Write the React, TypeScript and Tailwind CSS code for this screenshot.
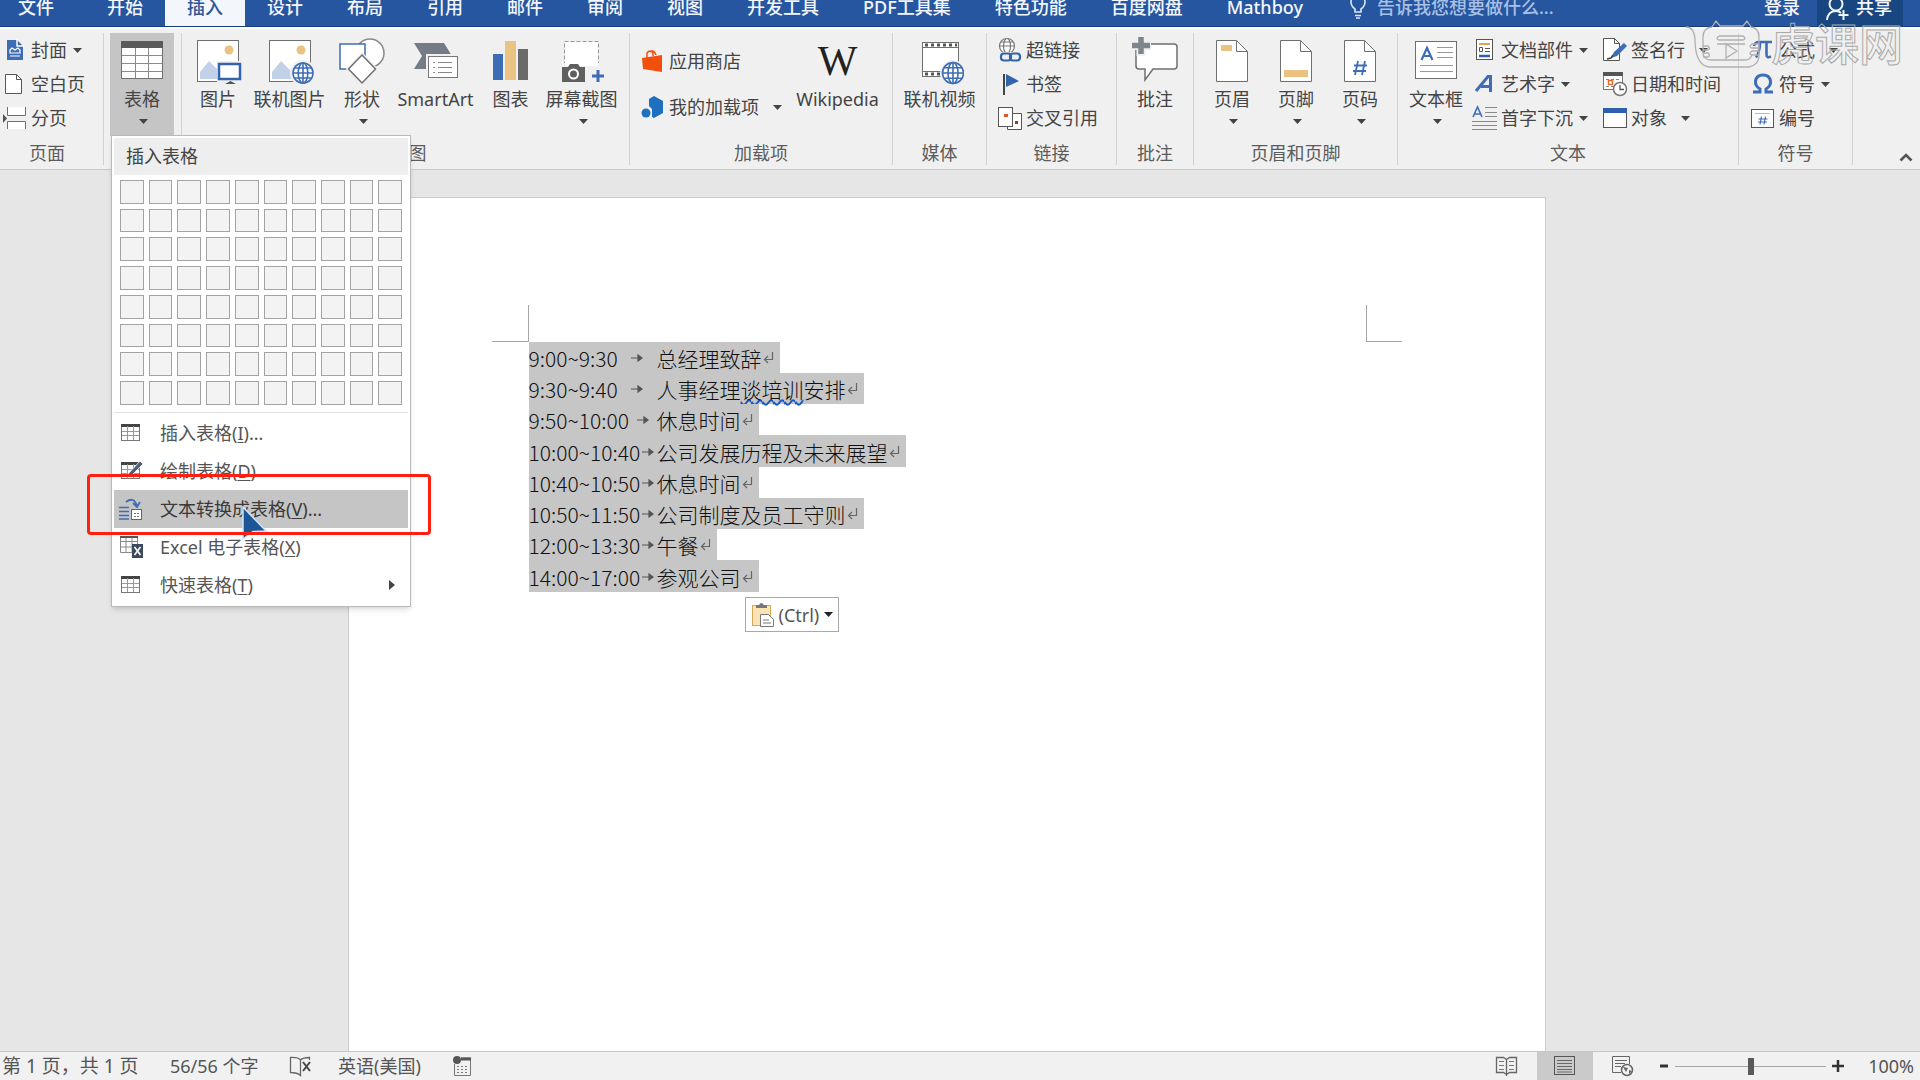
import type { ReactNode } from 'react';

const stroke = '#6f6f6f';
const blue = '#3e6db5';
const sand = '#eac282';

function Caret({ className = '' }: { className?: string }) {
  return (
    <svg className={`h-[5px] w-[9px] shrink-0 ${className}`} viewBox="0 0 9 5" aria-hidden="true">
      <path d="M0 0h9L4.5 5z" fill="currentColor" />
    </svg>
  );
}

function Svg({ w, h, children }: { w: number; h: number; children: ReactNode }) {
  return (
    <svg width={w} height={h} viewBox={`0 0 ${w} ${h}`} fill="none" aria-hidden="true" className="shrink-0">
      {children}
    </svg>
  );
}

/* ---------- large icons (48 x 48) ---------- */

function Globe({ x, y, r }: { x: number; y: number; r: number }) {
  return (
    <g stroke={blue} strokeWidth="1.6" fill="#fff">
      <circle cx={x} cy={y} r={r} />
      <ellipse cx={x} cy={y} rx={r * 0.48} ry={r} />
      <path d={`M${x} ${y - r}v${r * 2}M${x - r} ${y}h${r * 2}M${x - r * 0.85} ${y - r * 0.5}h${r * 1.7}M${x - r * 0.85} ${y + r * 0.5}h${r * 1.7}`} />
    </g>
  );
}

const TableIcon = () => (
  <Svg w={48} h={48}>
    <rect x="3.5" y="4.5" width="41" height="37" fill="#fff" stroke={stroke} />
    <rect x="3" y="4" width="42" height="7" fill="#5a5a5a" />
    <path d="M4 18.5h40M4 26.5h40M4 34.5h40M17.5 11v30M30.5 11v30" stroke="#8a8a8a" />
  </Svg>
);
const Photo = () => (
  <>
    <rect x="3.5" y="3.5" width="41" height="41" fill="#fff" stroke={stroke} />
    <circle cx="35" cy="13" r="4.5" fill={sand} />
    <path d="M6 42V35l9-11 14 14v4z" fill="#c3d1e8" />
  </>
);
const PictureIcon = () => (
  <Svg w={48} h={48}>
    <Photo />
    <rect x="23" y="24" width="25" height="24" fill="#f0f0f0" />
    <rect x="25" y="27" width="21" height="15" fill="#fff" stroke="#3463ad" strokeWidth="2.5" />
    <path d="M31 47l5.5-3 5.5 3z" fill="#555" />
  </Svg>
);
const OnlinePictureIcon = () => (
  <Svg w={48} h={48}>
    <Photo />
    <circle cx="37" cy="36" r="13" fill="#f0f0f0" />
    <Globe x={37} y={36} r={10} />
  </Svg>
);
const ShapesIcon = () => (
  <Svg w={48} h={48}>
    <circle cx="32" cy="16" r="14" fill="#fff" stroke="#8a8a8a" strokeWidth="1.5" />
    <rect x="2" y="7" width="25" height="25" fill="#fff" stroke={blue} strokeWidth="1.5" />
    <path d="M24 18l13.5 14L24 46 10.5 32z" fill="#fff" stroke="#f0f0f0" strokeWidth="4" />
    <path d="M24 18l13.5 14L24 46 10.5 32z" fill="#fff" stroke={stroke} strokeWidth="1.5" />
  </Svg>
);
const SmartArtIcon = () => (
  <Svg w={48} h={48}>
    <path d="M2 6h30l8 13H16v13H2l8-13z" fill="#757b84" />
    <rect x="14" y="17" width="34" height="26" fill="#f0f0f0" />
    <rect x="16.5" y="19.5" width="29" height="21" fill="#fff" stroke="#777" />
    <path d="M26 25.5h14M26 30.5h14M26 35.5h14M21 25.5h2M21 30.5h2M21 35.5h2" stroke="#888" />
  </Svg>
);
const ChartIcon = () => (
  <Svg w={48} h={48}>
    <rect x="6" y="17" width="10" height="26" fill={blue} />
    <rect x="18" y="4" width="11" height="39" fill={sand} />
    <rect x="31" y="12" width="10" height="31" fill="#6a6a6a" />
  </Svg>
);
const ScreenshotIcon = () => (
  <Svg w={48} h={48}>
    <rect x="6.5" y="4.5" width="34" height="38" fill="#fff" stroke="#999" strokeDasharray="4 2" />
    <rect x="2" y="26" width="46" height="22" fill="#f0f0f0" />
    <rect x="7" y="25" width="33" height="4" fill="#fff" />
    <path d="M4 30h6l2-3h8l2 3h5v15H4z" fill="#5f5f5f" />
    <circle cx="15.5" cy="37" r="4.5" stroke="#fff" strokeWidth="2" />
    <path d="M40 33v12M34 39h12" stroke={blue} strokeWidth="3" />
  </Svg>
);
const VideoIcon = () => (
  <Svg w={48} h={48}>
    <rect x="6.5" y="5.5" width="36" height="34" fill="#fff" stroke={stroke} />
    <path d="M7 10.5h35M7 34.5h35" stroke={stroke} />
    <path d="M9 8h32M9 37h32" stroke="#555" strokeWidth="3" strokeDasharray="3 3" />
    <circle cx="37" cy="36" r="13" fill="#f0f0f0" />
    <Globe x={37} y={36} r={10.5} />
  </Svg>
);
const CommentIcon = () => (
  <Svg w={48} h={48}>
    <path d="M7 7h36q3 0 3 3v19q0 3-3 3H22l-8 11v-11H8q-3 0-3-3V10q0-3 2-3z" fill="#fff" stroke={stroke} strokeWidth="1.5" />
    <path d="M10 0v19M0 8.5h20" stroke="#f0f0f0" strokeWidth="9" />
    <path d="M10 0v17M1 8.5h18" stroke="#7f858c" strokeWidth="5.5" />
  </Svg>
);
function PageIcon({ children }: { children: ReactNode }) {
  return (
    <Svg w={48} h={48}>
      <path d="M8.5 3.5h20l11 11v30h-31z" fill="#fff" stroke={stroke} />
      <path d="M28.5 3.5v11h11" stroke={stroke} />
      {children}
    </Svg>
  );
}
const TextBoxIcon = () => (
  <Svg w={48} h={48}>
    <rect x="3.5" y="4.5" width="41" height="37" fill="#fff" stroke={stroke} />
    <path d="M9.5 23l5.5-12 5.5 12M11.5 19h7" stroke={blue} strokeWidth="2.2" />
    <path d="M25 10.5h16M25 15.5h16M25 20.5h16M8 28.5h33M8 34.5h33" stroke="#999" />
  </Svg>
);

/* ---------- small icons (24 x 24) ---------- */

const CoverIcon = () => (
  <Svg w={24} h={24}>
    <path d="M4 2h10l6 6v14H4z" fill={blue} />
    <path d="M14 1v7h7" stroke="#fff" strokeWidth="1.5" />
    <path d="M7 12l2-2 3 2 3-2 2 2v3H7zM7 18h10" stroke="#fff" strokeWidth="1.2" />
  </Svg>
);
const BlankIcon = () => (
  <Svg w={24} h={24}>
    <path d="M2.5 2.5h11l5 5v14h-16z" fill="#fff" stroke="#555" />
    <path d="M13.5 2.5v5h5" stroke="#555" />
  </Svg>
);
const BreakIcon = () => (
  <Svg w={24} h={24}>
    <path d="M4.5 1v8.500h18V1M4.5 23v-7.500h18V23" fill="#fff" stroke={stroke} />
    <path d="M0 8l4 4.500L0 17z" fill="#555" />
  </Svg>
);
const StoreIcon = () => (
  <Svg w={24} h={24}>
    <path d="M1 9l20-3v17L2 20z" fill="#f24f0c" />
    <path d="M6 9V4q3-4 6 0v3M9 3q4-3 6 3" stroke="#f24f0c" strokeWidth="1.5" />
  </Svg>
);
const AddinIcon = () => (
  <Svg w={24} h={24}>
    <path d="M13 1l9 5v12l-9 5-2-1v-8l-3-3V4z" fill="#1f6fc0" />
    <circle cx="5" cy="18" r="4.5" fill="#1f6fc0" />
  </Svg>
);
const LinkIcon = () => (
  <Svg w={24} h={26}>
    <g stroke="#777" strokeWidth="1.2" fill="#fff">
      <circle cx="9" cy="9" r="7.5" />
      <ellipse cx="9" cy="9" rx="3.5" ry="7.5" />
      <path d="M1.5 9h15M3 5h12" />
    </g>
    <rect x="2" y="15" width="22" height="10" fill="#f0f0f0" />
    <rect x="3" y="16.5" width="10" height="7" rx="3" stroke="#3463ad" strokeWidth="2.2" />
    <rect x="12" y="16.5" width="10" height="7" rx="3" stroke="#3463ad" strokeWidth="2.2" />
  </Svg>
);
const BookmarkIcon = () => (
  <Svg w={24} h={24}>
    <path d="M6 2v21" stroke="#444" strokeWidth="2" />
    <path d="M8 2l13 7-13 6z" fill="#3463ad" />
  </Svg>
);
const CrossRefIcon = () => (
  <Svg w={26} h={26}>
    <path d="M10.5 8.5h14v16h-14z" fill="#fff" stroke="#555" />
    <rect x="1.500" y="2.500" width="14" height="19" fill="#fff" stroke="#555" />
    <rect x="7" y="9" width="4" height="3" fill="#e0562b" />
    <rect x="18" y="16" width="3" height="3" fill="#a3341c" />
  </Svg>
);
const PartsIcon = () => (
  <Svg w={24} h={24}>
    <rect x="3.5" y="1.5" width="16" height="20" fill="#fff" stroke="#555" />
    <path d="M6 6h11" stroke="#e0a24e" strokeWidth="2" />
    <path d="M6.5 9.5h3v4h-3z" stroke="#555" />
    <path d="M12 10.5h5M12 13.5h5" stroke="#555" />
    <path d="M6 18h11" stroke="#2e5fae" strokeWidth="2.5" />
  </Svg>
);
const WordArtIcon = () => (
  <Svg w={24} h={24}>
    <path d="M3 19L15 4.5h2.500V20M8 14.5h9" stroke={blue} strokeWidth="3" />
  </Svg>
);
const DropCapIcon = () => (
  <Svg w={26} h={26}>
    <path d="M1 12L5.5 2 10 12M2.500 9h6" stroke={blue} strokeWidth="1.6" />
    <path d="M13 2.5h12M13 7.5h12M13 11.5h12M0 16.5h25M0 20.5h25M0 24.5h25" stroke="#8a8a8a" />
  </Svg>
);
const SignatureIcon = () => (
  <Svg w={26} h={26}>
    <path d="M1.5 1.5h11l5 5v17h-16z" fill="#fff" stroke="#555" />
    <path d="M12.5 1.5v5h5" stroke="#555" />
    <path d="M9 21l3-6 10-9 3 3-10 10z" fill={blue} />
    <path d="M5 22l4-1 2-3" stroke="#444" strokeWidth="1.5" />
  </Svg>
);
const DateIcon = () => (
  <Svg w={26} h={26}>
    <rect x="1.5" y="1.5" width="19" height="17" fill="#fff" stroke="#777" />
    <path d="M1 3h20" stroke="#555" strokeWidth="4" />
    <path d="M4 8.5h14M4 15.5h8" stroke="#888" strokeDasharray="3 2" />
    <rect x="6.5" y="9.5" width="4" height="4" stroke="#e0702b" strokeWidth="1.5" />
    <circle cx="18" cy="18" r="6.5" fill="#fff" stroke="#777" strokeWidth="1.5" />
    <path d="M18 14v4.5h4" stroke="#555" strokeWidth="1.3" />
  </Svg>
);
const ObjectIcon = () => (
  <Svg w={26} h={26}>
    <rect x="1.5" y="3.5" width="23" height="19" fill="#fff" stroke="#555" />
    <path d="M1 5.5h24" stroke="#2e5fae" strokeWidth="5" />
  </Svg>
);
const PiIcon = () => (
  <Svg w={24} h={24}>
    <path d="M3 8q1-4 5-4h13M9 4.5q0 9-4 15M15.5 4.5v12q0 4 4.500 2" stroke={blue} strokeWidth="2.6" />
  </Svg>
);
const OmegaIcon = () => (
  <Svg w={24} h={24}>
    <path d="M2 20h7v-3q-5-3-4.500-8Q5.500 3 12 3t7.500 6q.5 5-4.500 8v3h7" stroke={blue} strokeWidth="3" />
  </Svg>
);
const NumberIcon = () => (
  <Svg w={26} h={26}>
    <rect x="1.500" y="4.500" width="22" height="18" fill="#fff" stroke="#555" />
    <path d="M5 8.5h15" stroke="#bbb" />
    <path d="M11.5 11.5l-1.500 8M15.5 11.5l-1.500 8M8.500 14h9M8 17h9" stroke={blue} strokeWidth="1.2" />
  </Svg>
);

/* ---------- ribbon pieces ---------- */

function Big({ icon, label, width, caret, pressed }: { icon: ReactNode; label: string; width: string; caret?: boolean; pressed?: boolean }) {
  return (
    <button type="button" className={`flex h-[103px] shrink-0 flex-col items-center pt-1 ${width} ${pressed ? 'bg-[#c5c5c5]' : ''}`}>
      {icon}
      <span className="mt-0.5 leading-6 whitespace-nowrap">{label}</span>
      {caret && <Caret className="mt-2 ml-[3px]" />}
    </button>
  );
}

function Small({ icon, label, caret, height = 'h-[34px]' }: { icon: ReactNode; label: string; caret?: 'near' | 'far'; height?: string }) {
  return (
    <button type="button" className={`flex items-center whitespace-nowrap ${height}`}>
      <span className="mr-[3px] flex w-[26px] justify-center">{icon}</span>
      {label}
      {caret && <Caret className={caret === 'far' ? 'ml-[14px]' : 'ml-[6px]'} />}
    </button>
  );
}

function Group({ label, width, children }: { label?: string; width: string; children: ReactNode }) {
  return (
    <section aria-label={label} className={`flex shrink-0 flex-col border-r border-[#d2d2d2] ${width}`}>
      <div className="flex h-[103px]">{children}</div>
      {label && <div className="mt-[5px] text-center leading-6 text-[#5c5c5c]">{label}</div>}
    </section>
  );
}

const tabs = ['开始', '插入', '设计', '布局', '引用', '邮件', '审阅', '视图', '开发工具', 'PDF工具集', '特色功能', '百度网盘', 'Mathboy'];

function TabBar() {
  return (
    <header className="h-[27px] overflow-hidden border-b border-[#163f7c] bg-[#2656a0]">
      <nav className="-mt-[14px] flex h-[41px] items-center font-medium text-[#f3f7fd]">
        <button type="button" className="w-[85px] pr-[13px] text-center">文件</button>
        {tabs.map((t) => (
          <button
            key={t}
            type="button"
            className={`h-full px-[22px] whitespace-nowrap ${t === '插入' ? 'bg-[#f3f6fa] text-[#2b579a]' : ''}`}
          >
            {t}
          </button>
        ))}
        <label className="ml-[24px] flex items-center gap-[10px]">
          <Svg w={18} h={24}>
            <path d="M6 17v-3Q2 11 2 7q0-6 7-6t7 6q0 4-4 7v3zM6 20.5h6M7 23h4" stroke="#dbe6f7" strokeWidth="1.6" />
          </Svg>
          <span className="sr-only">告诉我</span>
          <input className="w-[190px] bg-transparent outline-none placeholder:text-[#a9c0e6] placeholder:opacity-100" placeholder="告诉我您想要做什么..." />
        </label>
        <button type="button" className="ml-auto px-[17px]">登录</button>
        <button type="button" className="mr-[17px] flex h-full items-center gap-[6px] bg-[#174680] pr-[11px] pl-[9px]">
          <Svg w={24} h={28}>
            <circle cx="10" cy="11" r="6.5" stroke="#eef3fb" strokeWidth="2" />
            <path d="M1 27q1-9 9-9 3 0 5 2M17.5 17v10M12.5 22h10" stroke="#eef3fb" strokeWidth="2" />
          </Svg>
          共享
        </button>
      </nav>
    </header>
  );
}

/* ---------- table menu ---------- */

function Grid({ children }: { children?: ReactNode }) {
  return (
    <Svg w={24} h={24}>
      <rect x="2.5" y="4.5" width="18" height="15" fill="#fff" stroke="#777" />
      <path d="M2 4.5h19" stroke="#444" strokeWidth="3" />
      <path d="M3 10.5h17M3 14.5h17M8.5 5v14M14.5 5v14" stroke="#999" />
      {children}
    </Svg>
  );
}

const menuItems = [
  { text: '插入表格', k: 'I', tail: '...', icon: <Grid /> },
  {
    text: '绘制表格',
    k: 'D',
    icon: (
      <Grid>
        <path d="M9 15L21 2l3 3-12 12-4 1z" fill="#4c5f7d" stroke="#fff" strokeWidth=".8" />
      </Grid>
    ),
  },
  {
    text: '文本转换成表格',
    k: 'V',
    tail: '...',
    icon: (
      <Svg w={24} h={24}>
        <path d="M0 10.5h10M0 14.5h10M0 18.5h10M0 22h10" stroke={blue} strokeWidth="1.6" />
        <path d="M7 5q8-6 11 4M14 6l4 4 3-5" stroke={blue} strokeWidth="1.8" />
        <rect x="12.5" y="12.5" width="10" height="10" fill="#fff" stroke="#666" />
        <path d="M15 16.5h6M15 19.5h6" stroke="#777" strokeDasharray="2 1" />
      </Svg>
    ),
  },
  {
    text: 'Excel 电子表格',
    k: 'X',
    icon: (
      <Svg w={24} h={24}>
        <path d="M1.5 1.5h17v16h-17zM1 6.5h18M1 12h18M7 2v15M13 2v15" fill="#fff" stroke="#888" />
        <path d="M1 2h18" stroke="#555" strokeWidth="2" />
        <rect x="13" y="9" width="11" height="14" fill="#3d4a5c" />
        <path d="M15.5 12l6 8M21.5 12l-6 8" stroke="#fff" strokeWidth="1.6" />
      </Svg>
    ),
  },
  { text: '快速表格', k: 'T', icon: <Grid />, sub: true },
];

function TableMenu() {
  return (
    <div className="absolute top-[102px] left-[7px] z-20 w-[300px] border border-[#b9b9b9] bg-white p-0.5 shadow-md">
      <div className="bg-[#eeeeee] pl-[12px] leading-[37px]">插入表格</div>
      <div className="mx-[6px] mt-[5px] grid grid-cols-10 gap-[5px]">
        {Array.from({ length: 80 }, (_, i) => (
          <button key={i} type="button" aria-label={`${Math.floor(i / 10) + 1} x ${(i % 10) + 1}`} className="aspect-square border border-[#a3a3a3] bg-[#f4f3f3]" />
        ))}
      </div>
      <hr className="mt-[7px] mb-px border-[#e0e0e0]" />
      {menuItems.map((m) => (
        <div key={m.k} className="relative">
          <button type="button" className={`flex h-[38px] w-full items-center pl-[5px] whitespace-nowrap ${m.k === 'V' ? 'bg-[#c5c5c5] text-[#3a3a3a]' : 'text-[#555]'}`}>
            <span className="mr-[17px]">{m.icon}</span>
            {m.text}(<u className="underline-offset-2">{m.k}</u>){m.tail}
            {m.sub && (
              <svg className="mr-[13px] ml-auto h-[10px] w-[6px]" viewBox="0 0 6 10" aria-hidden="true">
                <path d="M0 0l6 5-6 5z" fill="#444" />
              </svg>
            )}
          </button>
          {m.k === 'V' && (
            <>
              <svg className="absolute top-[16px] left-[127px] z-10 h-[34px] w-[30px]" viewBox="0 0 30 34" aria-hidden="true">
                <path d="M2 1l23 24-13 .5L2 33z" fill="#1c5696" stroke="#cfe2f7" strokeWidth="1.5" />
              </svg>
              <div className="absolute -top-[16px] -right-[23px] -bottom-[7px] -left-[27px] z-20 rounded-sm border-[3px] border-[#ff2010]" />
            </>
          )}
        </div>
      ))}
    </div>
  );
}

function Watermark() {
  return (
    <div className="pointer-events-none flex items-center gap-[8px] whitespace-nowrap" aria-hidden="true">
      <Svg w={78} h={52}>
        <path
          d="M1 9q8 0 9 12 0 26 14 28h40q9-2 10-10V19q0-9-8-10l-4-6-4 5H35l-4-5-4 6q-9 1-9 10v15q0 8 8 8h34q6 0 7-6M34 18h24q4 3 0 4H34q-4-1 0-4M32 26h28M18 28h5q3 3 0 4h-5M18 35h5q3 3 0 4h-5M74 26h-7q-4 3 0 4h7M74 33h-7q-4 3 0 4h7M41 26v14l11-7z"
          stroke="#b0b0b0"
          strokeWidth="1.3"
        />
      </Svg>
      <span className="text-[44px] leading-[52px] font-medium text-transparent [-webkit-text-stroke:1px_#aaaaaa]">虎课网</span>
    </div>
  );
}

function Ribbon() {
  return (
    <div className="relative z-10 flex border-t-2 border-b border-[#c9c9c9] border-t-[#fafcff] bg-[#f0f0f0] pt-1 pb-1">
      <Group label="页面" width="w-[104px] pr-[9px]">
        <div className="pl-[2px]">
          <Small icon={<CoverIcon />} label="封面" caret="near" />
          <Small icon={<BlankIcon />} label="空白页" />
          <Small icon={<BreakIcon />} label="分页" />
        </div>
      </Group>
      <div className="relative flex">
        <Group width="w-[78px]">
          <div className="pl-[6px]">
            <Big icon={<TableIcon />} label="表格" width="w-[64px]" caret pressed />
          </div>
        </Group>
        <TableMenu />
      </div>
      <Group label="插图" width="w-[448px] pl-[6px]">
        <Big icon={<PictureIcon />} label="图片" width="w-[60px]" />
        <Big icon={<OnlinePictureIcon />} label="联机图片" width="w-[83px]" />
        <Big icon={<ShapesIcon />} label="形状" width="w-[62px]" caret />
        <Big icon={<SmartArtIcon />} label="SmartArt" width="w-[85px]" />
        <Big icon={<ChartIcon />} label="图表" width="w-[65px]" />
        <Big icon={<ScreenshotIcon />} label="屏幕截图" width="w-[77px]" caret />
      </Group>
      <Group label="加载项" width="w-[263px]">
        <div className="w-[160px] pt-[5px] pl-[10px]">
          <Small icon={<StoreIcon />} label="应用商店" height="h-[46px]" />
          <Small icon={<AddinIcon />} label="我的加载项" caret="far" height="h-[46px]" />
        </div>
        <Big
          icon={<span className="h-[48px] font-['Liberation_Serif',serif] text-[42px] leading-[48px] text-[#222]">W</span>}
          label="Wikipedia"
          width="w-[95px]"
        />
      </Group>
      <Group label="媒体" width="w-[94px]">
        <Big icon={<VideoIcon />} label="联机视频" width="w-full" />
      </Group>
      <Group label="链接" width="w-[130px]">
        <div className="pl-[10px]">
          <Small icon={<LinkIcon />} label="超链接" />
          <Small icon={<BookmarkIcon />} label="书签" />
          <Small icon={<CrossRefIcon />} label="交叉引用" />
        </div>
      </Group>
      <Group label="批注" width="w-[77px]">
        <Big icon={<CommentIcon />} label="批注" width="w-full" />
      </Group>
      <Group label="页眉和页脚" width="w-[204px]">
        <div className="flex pl-[6px]">
          <Big
            icon={
              <PageIcon>
                <rect x="13" y="8" width="11" height="6" fill={sand} />
              </PageIcon>
            }
            label="页眉"
            width="w-[64px]"
            caret
          />
          <Big
            icon={
              <PageIcon>
                <rect x="12" y="33" width="24" height="7" fill={sand} />
              </PageIcon>
            }
            label="页脚"
            width="w-[64px]"
            caret
          />
          <Big
            icon={
              <PageIcon>
                <path d="M22 24l-3 14M29 24l-3 14M18 28.5h13M17 34h13" stroke={blue} strokeWidth="1.8" />
              </PageIcon>
            }
            label="页码"
            width="w-[64px]"
            caret
          />
        </div>
      </Group>
      <Group label="文本" width="w-[341px]">
        <div className="flex pl-[8px]">
          <Big icon={<TextBoxIcon />} label="文本框" width="w-[60px]" caret />
          <div className="ml-[6px] w-[130px]">
            <Small icon={<PartsIcon />} label="文档部件" caret="near" />
            <Small icon={<WordArtIcon />} label="艺术字" caret="near" />
            <Small icon={<DropCapIcon />} label="首字下沉" caret="near" />
          </div>
          <div>
            <Small icon={<SignatureIcon />} label="签名行" caret="far" />
            <Small icon={<DateIcon />} label="日期和时间" />
            <Small icon={<ObjectIcon />} label="对象" caret="far" />
          </div>
        </div>
      </Group>
      <Group label="符号" width="w-[114px]">
        <div className="pl-[11px]">
          <Small icon={<PiIcon />} label="公式" caret="far" />
          <Small icon={<OmegaIcon />} label="符号" caret="near" />
          <Small icon={<NumberIcon />} label="编号" />
        </div>
      </Group>
      <button type="button" aria-label="折叠功能区" className="mr-[5px] ml-auto self-end p-0.5">
        <Svg w={14} h={12}>
          <path d="M1.5 9.5L7 4l5.500 5.500" stroke="#555" strokeWidth="2.6" />
        </Svg>
      </button>
    </div>
  );
}

/* ---------- document ---------- */

const schedule: { time: string; text: ReactNode }[] = [
  { time: '9:00~9:30', text: '总经理致辞' },
  {
    time: '9:30~9:40',
    text: (
      <span>
        人事经理
        <span className="underline decoration-[#1557c8] decoration-wavy decoration-[1.5px] underline-offset-1">谈培训</span>
        安排
      </span>
    ),
  },
  { time: '9:50~10:00', text: '休息时间' },
  { time: '10:00~10:40', text: '公司发展历程及未来展望' },
  { time: '10:40~10:50', text: '休息时间' },
  { time: '10:50~11:50', text: '公司制度及员工守则' },
  { time: '12:00~13:30', text: '午餐' },
  { time: '14:00~17:00', text: '参观公司' },
];

function Document() {
  return (
    <main className="flex min-h-0 flex-1 justify-center overflow-hidden bg-[#e6e6e6] pt-[27px] pr-[27px]">
      <article className="w-[1198px] border border-b-0 border-[#cbcbcb] bg-white pt-[107px]">
        <div className="flex justify-between px-[143px]">
          <span className="h-[37px] w-[37px] border-r border-b border-[#a5a5a5]" />
          <span className="h-[37px] w-[36px] border-b border-l border-[#a5a5a5]" />
        </div>
        <div className="flex flex-col items-start pl-[180px] font-['Noto_Sans_CJK_SC',sans-serif] text-[21px] font-light text-[#111]">
          {schedule.map((row) => (
            <p key={row.time} className="flex h-[31px] items-center bg-[#c6c6c6] pt-px leading-[30px] nth-[4n]:h-[32px]">
              <span className="flex w-[128px] items-center">
                {row.time}
                <svg className="mx-auto h-[8px] w-[12px] shrink-0" viewBox="0 0 12 8" fill="none" aria-hidden="true">
                  <path d="M0 4h11M7 1l4 3-4 3z" fill="#555" stroke="#555" strokeWidth="1.2" />
                </svg>
              </span>
              {row.text}
              <svg className="mr-[5px] ml-px h-[12px] w-[12px] shrink-0" viewBox="0 0 12 12" fill="none" aria-hidden="true">
                <path d="M9.5 0v7.500H2M5 4L1.500 7.500 5 11" stroke="#666" strokeWidth="1.2" />
              </svg>
            </p>
          ))}
          <button type="button" className="mt-[5px] ml-[216px] flex h-[35px] items-center border border-[#a9a9a9] bg-white pr-[5px] pl-[5px] font-['Noto_Sans',sans-serif] text-[18px] font-normal text-[#555]">
            <Svg w={24} h={26}>
              <rect x="1.500" y="3.500" width="18" height="20" fill="#fbe3b4" stroke="#d9a857" />
              <path d="M5 6V3h3q2-4 5 0h3v3z" fill="#777" />
              <path d="M9.5 12.5h8l5 5v7h-13z" fill="#fff" stroke="#777" />
              <path d="M12 18h6M12 21h8" stroke="#777" />
            </Svg>
            <span className="mr-[5px] ml-[4px]">(Ctrl)</span>
            <Caret className="text-[#222]" />
          </button>
        </div>
      </article>
    </main>
  );
}

/* ---------- status bar ---------- */

function StatusBar() {
  return (
    <footer className="flex h-[29px] shrink-0 items-center border-t border-[#c6c6c6] bg-[#f1f1f1] pr-[6px] pl-[2px] whitespace-nowrap text-[#555]">
      <span className="w-[168px] text-[19px]">第 1 页，共 1 页</span>
      <span className="w-[119px]">56/56 个字</span>
      <button type="button" aria-label="校对" className="w-[49px]">
        <Svg w={24} h={22}>
          <path d="M11.5 20V5Q9 2 1.500 2.500v15q7 0 10 3zM11.5 5Q14 2.500 20.500 2.500V5" stroke="#666" strokeWidth="1.3" />
          <path d="M14 7l7 9M21 7l-7 9" stroke="#444" strokeWidth="2" />
        </Svg>
      </button>
      <button type="button" className="w-[114px] text-left">英语(美国)</button>
      <button type="button" aria-label="宏">
        <Svg w={22} h={22}>
          <path d="M2.5 9v11.500h16V3H9" stroke="#777" />
          <path d="M9 4h10" stroke="#555" strokeWidth="3" />
          <circle cx="5" cy="5" r="4" fill="#555" />
          <path d="M5 11.5h12M5 14.5h12M5 17.5h12" stroke="#777" strokeDasharray="2 2" />
        </Svg>
      </button>
      <button type="button" aria-label="阅读视图" className="ml-auto w-[62px] pl-[20px]">
        <Svg w={24} h={24}>
          <path d="M1.5 3.5h7l3 2 3-2h7v15h-7l-3 2-3-2h-7zM11.5 5v17" stroke="#666" strokeWidth="1.3" />
          <path d="M4 7.5h5M4 11.5h5M4 15.5h5M14 7.5h5M14 11.5h5M14 15.5h5" stroke="#777" />
        </Svg>
      </button>
      <button type="button" aria-label="页面视图" className="flex h-full w-[56px] items-center justify-center bg-[#cacaca]">
        <Svg w={24} h={24}>
          <rect x="1.500" y="2.500" width="20" height="18" stroke="#555" />
          <path d="M4 6.5h15M4 9.5h15M4 12.5h15M4 15.5h15M4 18h15" stroke="#666" />
        </Svg>
      </button>
      <button type="button" aria-label="Web 版式视图" className="w-[64px] pl-[18px]">
        <Svg w={24} h={24}>
          <path d="M18.5 10V2.5h-17v16H10M4 6.5h12M4 9.5h10M4 12.5h6" stroke="#666" />
          <circle cx="16" cy="16" r="5.500" stroke="#666" strokeWidth="1.5" fill="#f1f1f1" />
          <path d="M12 13l5 1-2 4zM18 16l3 1-3 3z" fill="#666" />
        </Svg>
      </button>
      <button type="button" aria-label="缩小" className="p-0.5">
        <Svg w={10} h={14}>
          <path d="M1 7h8" stroke="#333" strokeWidth="3" />
        </Svg>
      </button>
      <input
        type="range"
        aria-label="缩放"
        defaultValue={50}
        className="mx-[4px] h-[20px] w-[151px] appearance-none bg-transparent [&::-webkit-slider-runnable-track]:h-px [&::-webkit-slider-runnable-track]:bg-[#a5a5a5] [&::-webkit-slider-thumb]:-mt-[8px] [&::-webkit-slider-thumb]:h-[17px] [&::-webkit-slider-thumb]:w-[6px] [&::-webkit-slider-thumb]:appearance-none [&::-webkit-slider-thumb]:bg-[#5a5a5a]"
      />
      <button type="button" aria-label="放大" className="p-0.5">
        <Svg w={12} h={14}>
          <path d="M0 7h12M6 1v12" stroke="#333" strokeWidth="2.5" />
        </Svg>
      </button>
      <span className="ml-[22px]">100%</span>
    </footer>
  );
}

export default function App() {
  return (
    <div className="relative flex h-screen flex-col overflow-hidden font-['Noto_Sans','Noto_Sans_CJK_SC',sans-serif] text-[18px] leading-6 text-[#444]">
      <TabBar />
      <Ribbon />
      <Document />
      <StatusBar />
      <div className="pointer-events-none absolute top-[18px] right-[17px] z-10">
        <Watermark />
      </div>
    </div>
  );
}
